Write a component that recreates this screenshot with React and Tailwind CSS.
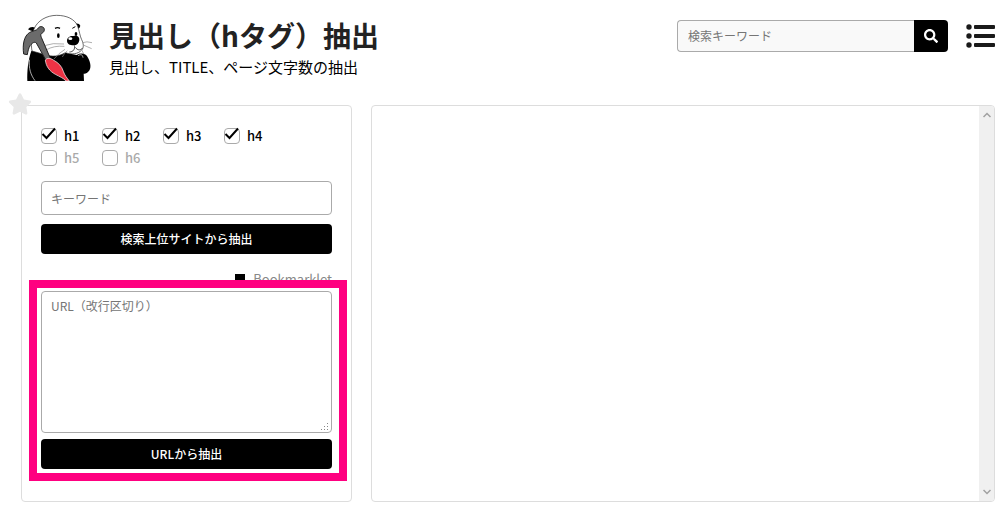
import { useState } from 'react';
import { FaSearch, FaStar } from 'react-icons/fa';

const HEADINGS = ['h1', 'h2', 'h3', 'h4', 'h5', 'h6'];

function OtterLogo() {
  return (
    <svg viewBox="30 15 225 225" className="size-[75px] shrink-0" aria-hidden="true">
      <path d="M52 228 C51 200 54 165 64 138 L120 134 L200 150 C214 142 228 146 234 158 C243 174 244 190 236 199 C232 205 226 207 221 206 L222 228 Z" fill="#000" />
      <path d="M58 164 C56 190 62 210 75 227" fill="none" stroke="#fff" strokeWidth="2" />
      <path d="M204 152 C214 146 218 150 219 158" fill="none" stroke="#fff" strokeWidth="2" />
      <path d="M54 73 Q62 62 76 68 L76 78 Q62 80 54 73 Z" fill="#000" />
      <path d="M196 56 Q208 54 211 62 Q210 70 203 71 Z" fill="#000" />
      <path
        d="M72 72 C82 47 110 31 140 31 C170 31 194 42 203 63 C208 78 210 94 215 104 C221 116 222 128 215 135 C204 148 184 149 166 143 C148 154 126 156 108 150 L66 138 C62 115 64 90 72 72 Z"
        fill="#fff"
        stroke="#222"
        strokeWidth="2"
      />
      <path d="M135 70 Q143 66 150 70" fill="none" stroke="#000" strokeWidth="4" />
      <path d="M187 70 L196 65" stroke="#000" strokeWidth="3" />
      <ellipse cx="145" cy="92" rx="4" ry="7" fill="#000" />
      <ellipse cx="198" cy="87" rx="4" ry="6" fill="#000" />
      <path d="M171 108 C171 97 180 92 190 93 C203 90 209 96 208 106 C207 116 199 122 190 121 C180 121 172 118 171 108 Z" fill="#000" />
      <ellipse cx="181" cy="101" rx="6" ry="4" fill="#fff" />
      <path d="M193 121 C196 132 190 141 178 141 M196 127 C202 136 211 137 216 130" fill="none" stroke="#000" strokeWidth="2" />
      <path d="M162 117 Q130 112 98 123 M163 124 Q132 121 108 135 M165 133 Q145 145 132 162 M172 137 Q162 146 157 156" fill="none" stroke="#888" strokeWidth="2" />
      <path d="M218 113 Q230 108 246 113 M220 120 L245 131 M214 133 L222 148" fill="none" stroke="#888" strokeWidth="2" />
      <path
        d="M41 147 C37 119 42 93 58 83 C68 77 79 77 83 72 C86 65 94 62 101 68 C105 73 103 82 95 85 C91 87 92 92 94 97 L121 160 L108 166 L79 114 C73 109 67 114 61 121 C55 130 54 138 52 149 Z"
        fill="#6b6b6b"
        stroke="#222"
        strokeWidth="3"
      />
      <path
        d="M106 165 C112 158 121 159 130 165 C146 174 155 183 160 199 C164 211 171 219 178 228 L168 228 C160 219 149 215 136 208 C118 198 108 184 106 165 Z"
        fill="#ed3345"
        stroke="#fff"
        strokeWidth="2"
      />
    </svg>
  );
}

function MenuIcon() {
  return (
    <svg viewBox="0 0 29 24" className="h-6 w-[29px]" fill="#1a1a1a" aria-hidden="true">
      <circle cx="3" cy="3" r="2.7" />
      <circle cx="3" cy="12" r="2.7" />
      <circle cx="3" cy="21" r="2.7" />
      <rect x="8" y="1" width="21" height="4" rx="1" />
      <rect x="8" y="10" width="21" height="4" rx="1" />
      <rect x="8" y="19" width="21" height="4" rx="1" />
    </svg>
  );
}

function Chevron({ className }) {
  return (
    <svg viewBox="0 0 8 6" className={className} fill="none" stroke="#a0a0a0" strokeWidth="1.5" aria-hidden="true">
      <path d="M0.5 5 L4 1.5 L7.5 5" />
    </svg>
  );
}

function HeadingCheckbox({ name, checked, onChange }) {
  return (
    <label
      className={`flex h-[22px] w-[61px] items-center gap-[7px] text-[13px] leading-5 font-medium ${
        checked ? 'text-black' : 'text-[#aaa]'
      }`}
    >
      <span className="relative size-4">
        <input
          type="checkbox"
          checked={checked}
          onChange={onChange}
          className="block size-4 appearance-none rounded border border-[#aaa] bg-white"
        />
        {checked && (
          <svg viewBox="0 0 16 16" className="pointer-events-none absolute inset-0 overflow-visible" aria-hidden="true">
            <path d="M1.5 6 L5.5 10 L14 0.5" fill="none" stroke="#000" strokeWidth="2" />
          </svg>
        )}
      </span>
      {name}
    </label>
  );
}

function App() {
  const [selected, setSelected] = useState(['h1', 'h2', 'h3', 'h4']);

  const toggle = (name) => {
    setSelected((prev) => (prev.includes(name) ? prev.filter((h) => h !== name) : [...prev, name]));
  };

  return (
    <div className="flex min-h-screen flex-col bg-white pt-[10px] pr-[5px] pb-[6px] pl-5 font-['Noto_Sans_CJK_JP',sans-serif] text-black">
      <header className="flex items-start">
        <OtterLogo />
        <div className="pt-[6px] pl-[14px]">
          <h1 className="text-[28px] leading-[38px] font-bold text-[#222]">見出し（hタグ）抽出</h1>
          <p className="text-[15px] leading-[26px]">見出し、TITLE、ページ文字数の抽出</p>
        </div>
        <div className="ml-auto flex items-center gap-[18px] pt-[10px]">
          <form className="flex h-8" onSubmit={(e) => e.preventDefault()}>
            <input
              type="text"
              aria-label="検索キーワード"
              placeholder="検索キーワード"
              className="w-[237px] rounded-l border border-r-0 border-[#aaa] bg-[#f9f9f9] px-[10px] text-xs placeholder:text-[#757575]"
            />
            <button type="submit" aria-label="検索" className="flex w-[34px] items-center justify-center rounded-r bg-black text-white">
              <FaSearch size={14} />
            </button>
          </form>
          <button type="button" aria-label="メニュー">
            <MenuIcon />
          </button>
        </div>
      </header>

      <main className="mt-5 ml-px flex flex-1 gap-[19px]">
        <section className="relative w-[331px] shrink-0 rounded border border-[#ddd] px-[19px] pt-[19px]">
          <button type="button" aria-label="お気に入り" className="absolute -top-[14px] -left-[14px] text-[#e8e8e8]">
            <FaStar size={24} />
          </button>
          <div className="flex flex-wrap">
            {HEADINGS.map((name) => (
              <HeadingCheckbox key={name} name={name} checked={selected.includes(name)} onChange={() => toggle(name)} />
            ))}
          </div>
          <input
            type="text"
            aria-label="キーワード"
            placeholder="キーワード"
            className="mt-3 block h-[34px] w-full rounded border border-[#aaa] px-[9px] text-xs placeholder:text-[#757575]"
          />
          <button type="button" className="mt-[9px] block h-[30px] w-full rounded bg-black text-xs font-medium text-white">
            検索上位サイトから抽出
          </button>
          <div className="mt-[14px] flex h-[22px] items-center justify-end gap-2 text-[13px] text-[#888]">
            <span className="size-[10px] bg-black" />
            <a href="#bookmarklet">Bookmarklet</a>
          </div>
          <div className="relative mt-px">
            <div className="relative">
              <textarea
                aria-label="URL（改行区切り）"
                placeholder="URL（改行区切り）"
                className="block h-[142px] w-full resize-none rounded border border-[#aaa] px-[9px] py-[5px] text-xs leading-[18px] placeholder:text-[#757575]"
              />
              <svg viewBox="0 0 9 9" className="pointer-events-none absolute right-[3px] bottom-[2px] size-[9px]" fill="#888" aria-hidden="true">
                <path d="M7 1h1v1H7z M4 4h1v1H4z M7 4h1v1H7z M1 7h1v1H1z M4 7h1v1H4z M7 7h1v1H7z" />
              </svg>
            </div>
            <button type="button" className="mt-[6px] block h-[30px] w-full rounded bg-black text-xs font-medium text-white">
              URLから抽出
            </button>
            <div className="pointer-events-none absolute -top-[11px] -right-[15px] -bottom-3 -left-3 border-8 border-[#ff0080]" />
          </div>
        </section>

        <section className="flex flex-1 justify-end overflow-hidden rounded border border-[#ddd]">
          <div className="flex w-[15px] flex-col items-center justify-between bg-[#f0f0f0] py-[6px]">
            <Chevron className="h-[6px] w-2" />
            <Chevron className="h-[6px] w-2 rotate-180" />
          </div>
        </section>
      </main>
    </div>
  );
}

export default App;
